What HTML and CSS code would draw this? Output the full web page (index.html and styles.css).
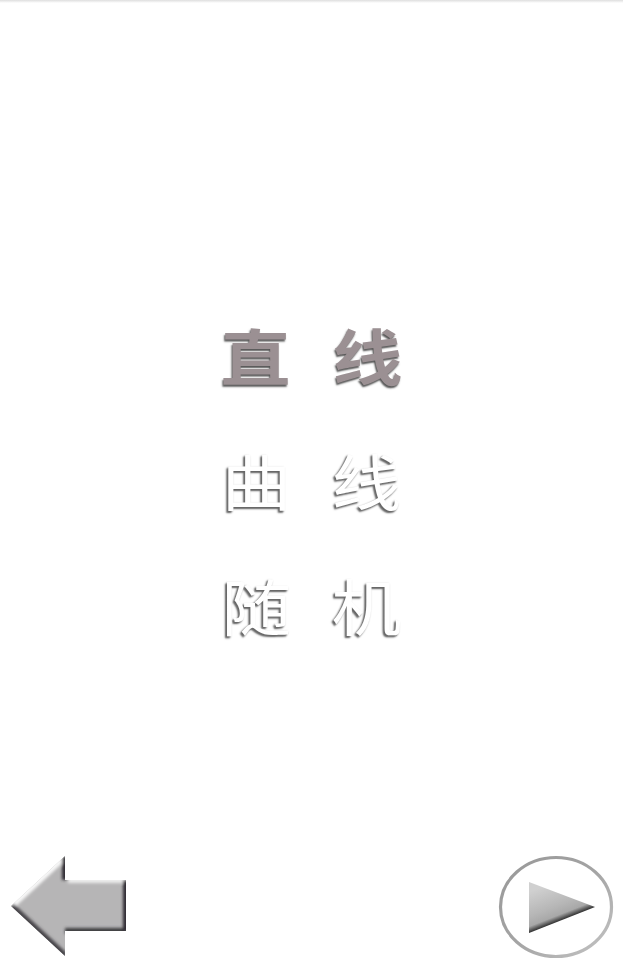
FILE: index.html
```html
<!DOCTYPE html>
<html lang="zh-CN">
<head>
  <meta charset="UTF-8" />
  <meta name="viewport" content="width=device-width, initial-scale=1.0"/>
  <title>直线</title>
  <link rel="stylesheet" href="styles.css">
</head>
<body>
  <div class="top-strip"></div>

  <!-- Mode menu -->
  <main class="menu">
    <div class="menu-item selected"><span>直</span><span>线</span></div>
    <div class="menu-item"><span>曲</span><span>线</span></div>
    <div class="menu-item"><span>随</span><span>机</span></div>
  </main>

  <!-- Bottom buttons -->
  <footer class="bottom-bar">
    <svg class="back-btn" width="118" height="104" viewBox="0 0 118 104">
      <defs>
        <clipPath id="arrow-clip">
          <polygon points="1,50 55,0 55,24 116,24 116,75 55,75 55,100" />
        </clipPath>
        <filter id="soft"><feGaussianBlur stdDeviation="1.8" /></filter>
        <filter id="soft-small"><feGaussianBlur stdDeviation="0.6" /></filter>
        <linearGradient id="ring" x1="0" y1="0" x2="1" y2="1">
          <stop offset="0" stop-color="#989898" />
          <stop offset="0.5" stop-color="#a4a4a4" />
          <stop offset="1" stop-color="#c4c4c4" />
        </linearGradient>
        <linearGradient id="play" gradientUnits="userSpaceOnUse" x1="45" y1="33" x2="59" y2="68.6">
          <stop offset="0" stop-color="#d0d0d0" />
          <stop offset="0.6" stop-color="#b6b6b6" />
          <stop offset="0.84" stop-color="#a8a8a8" />
          <stop offset="1" stop-color="#2c2c2c" />
        </linearGradient>
      </defs>
      <polygon points="1,50 55,0 55,24 116,24 116,75 55,75 55,100" fill="#b6b5b6" filter="url(#soft-small)" />
      <g clip-path="url(#arrow-clip)" filter="url(#soft)">
        <polyline points="1,50 55,0" stroke="#f8f8f8" stroke-width="7" fill="none" />
        <polyline points="58,24 116,24" stroke="#ececec" stroke-width="6" fill="none" />
        <polyline points="1,50 55,100" stroke="#46444a" stroke-width="7" fill="none" />
        <polyline points="55,75 116,75" stroke="#3e3c40" stroke-width="6" fill="none" />
        <polyline points="116,24 116,75" stroke="#2e2c30" stroke-width="6" fill="none" />
        <polyline points="55,0 55,24" stroke="#2e2c30" stroke-width="6" fill="none" />
      </g>
    </svg>

    <svg class="next-btn" width="118" height="106" viewBox="0 0 118 106">
      <ellipse cx="59" cy="53" rx="55.5" ry="49.5" fill="#fff" stroke="url(#ring)" stroke-width="3.2" filter="url(#soft-small)" />
      <polygon points="32,28 98,53 32,79" fill="url(#play)" filter="url(#soft-small)" />
    </svg>
  </footer>
</body>
</html>
```
FILE: styles.css
```css
body {
  margin: 0;
  height: 964px;
  background-color: #ffffff;
  font-family: "Noto Sans CJK SC", "Liberation Sans", sans-serif;
  display: flex;
  flex-direction: column;
  overflow: hidden;
}

.top-strip {
  height: 3px;
  background: linear-gradient(#dedede, #ffffff);
}

/* Mode menu */
.menu {
  margin-top: 310px;
  display: flex;
  flex-direction: column;
  gap: 41px;
  align-items: center;
}

.menu-item {
  display: flex;
  gap: 40px;
  height: 84px;
  font-size: 70px;
  line-height: 84px;
  color: #ffffff;
  text-shadow: -2px 2px 2px #666666, -1px 1px 2px #999999;
  transform: scaleY(0.88);
}

.menu-item.selected {
  gap: 42px;
  font-weight: 700;
  color: #9b9093;
  text-shadow: -1px 2px 2px #555555;
}

/* Bottom buttons */
.bottom-bar {
  margin-top: auto;
  padding: 0 8px 4px 10px;
  display: flex;
  justify-content: space-between;
  align-items: flex-end;
}

.back-btn, .next-btn {
  display: block;
}
```
